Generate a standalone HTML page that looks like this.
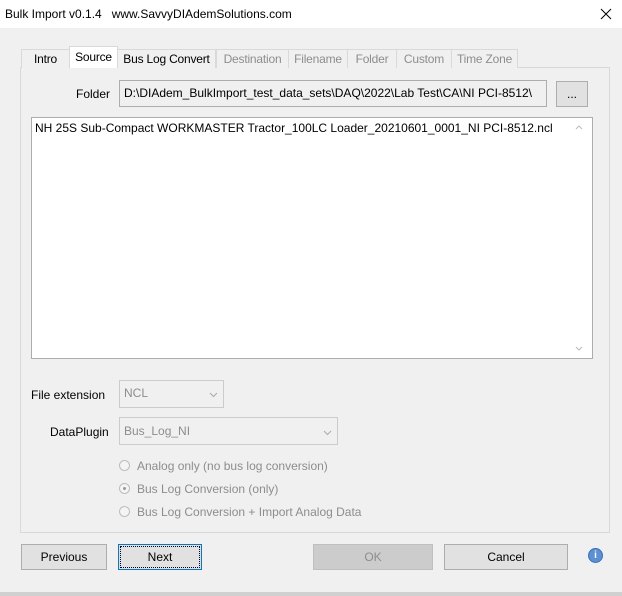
<!DOCTYPE html><html><head><style>
*{box-sizing:border-box}
body{margin:0;width:622px;height:596px;background:#f0f0f0;font-family:"Liberation Sans",sans-serif;font-size:12px;color:#000;position:relative;overflow:hidden}
.a{position:absolute}
.tab{position:absolute;top:49px;height:19px;border:1px solid #d9d9d9;border-bottom:none;background:#f0f0f0;color:#8d8d8d;text-align:center;line-height:18px;white-space:nowrap;letter-spacing:-0.2px}
.btn{position:absolute;top:544px;height:26px;border:1px solid #adadad;background:#e1e1e1;text-align:center;line-height:24px}
.dis{color:#8d8d8d}
.rad{position:absolute;left:119px;width:11px;height:11px;border:1px solid #bcbcbc;border-radius:50%;background:#f4f4f4}
</style></head><body>
<div class="a" style="left:0;top:0;width:622px;height:28px;background:#fff"></div>
<div class="a" style="left:5px;top:7px;font-size:12px">Bulk Import v0.1.4&nbsp;&nbsp; www.SavvyDIAdemSolutions.com</div>
<svg class="a" style="left:600px;top:8px" width="12" height="12"><path d="M1 1L11 11M11 1L1 11" stroke="#000" stroke-width="1"/></svg>
<div class="a" style="left:20px;top:67px;width:590px;height:466px;border:1px solid #d9d9d9"></div>
<div class="tab" style="left:21px;width:49px;color:#000">Intro</div>
<div class="tab" style="left:69px;top:46px;width:49px;height:22px;background:#fff;color:#000;line-height:20px;z-index:2">Source</div>
<div class="tab" style="left:117px;width:99px;color:#000">Bus Log Convert</div>
<div class="tab" style="left:216px;width:73px">Destination</div>
<div class="tab" style="left:288px;width:60px">Filename</div>
<div class="tab" style="left:347px;width:50px">Folder</div>
<div class="tab" style="left:396px;width:56px">Custom</div>
<div class="tab" style="left:451px;width:67px">Time Zone</div>
<div class="a" style="left:76px;top:87px">Folder</div>
<div class="a" style="left:119px;top:80px;width:428px;height:27px;border:1px solid #adadad;background:#f0f0f0;padding:5px 4px">D:\DIAdem_BulkImport_test_data_sets\DAQ\2022\Lab Test\CA\NI PCI-8512\</div>
<div class="a" style="left:556px;top:81px;width:32px;height:26px;border:1px solid #adadad;background:#e1e1e1;text-align:center;line-height:24px">...</div>
<div class="a" style="left:31px;top:117px;width:562px;height:242px;border:1px solid #adadad;background:#fff;padding:3px 3px">NH 25S Sub-Compact WORKMASTER Tractor_100LC Loader_20210601_0001_NI PCI-8512.ncl</div>
<svg class="a" style="left:575px;top:124px" width="8" height="6"><path d="M1 5L4 2L7 5" fill="none" stroke="#bbb"/></svg>
<svg class="a" style="left:575px;top:346px" width="8" height="6"><path d="M1 1L4 4L7 1" fill="none" stroke="#bbb"/></svg>
<div class="a" style="left:31px;top:388px">File extension</div>
<div class="a" style="left:119px;top:380px;width:105px;height:28px;border:1px solid #ccc;background:#f0f0f0;padding:5px 4px" ><span class="dis">NCL</span><svg class="a" style="right:5px;top:11px" width="9" height="6"><path d="M1 1L4.5 4.5L8 1" fill="none" stroke="#aaa"/></svg></div>
<div class="a" style="left:50px;top:425px">DataPlugin</div>
<div class="a" style="left:119px;top:417px;width:219px;height:28px;border:1px solid #ccc;background:#f0f0f0;padding:6px 4px"><span class="dis">Bus_Log_NI</span><svg class="a" style="right:5px;top:12px" width="9" height="6"><path d="M1 1L4.5 4.5L8 1" fill="none" stroke="#aaa"/></svg></div>
<div class="rad" style="top:460px"></div>
<div class="a dis" style="left:137px;top:459px">Analog only (no bus log conversion)</div>
<div class="rad" style="top:483px"><div class="a" style="left:3px;top:3px;width:3px;height:3px;border-radius:50%;background:#999"></div></div>
<div class="a dis" style="left:137px;top:482px">Bus Log Conversion (only)</div>
<div class="rad" style="top:506px"></div>
<div class="a dis" style="left:137px;top:505px">Bus Log Conversion + Import Analog Data</div>
<div class="btn" style="left:21px;width:86px">Previous</div>
<div class="btn" style="left:118px;width:84px;border:1px solid #0078d7;outline:1px dotted #000;outline-offset:-3px">Next</div>
<div class="btn dis" style="left:313px;width:120px;background:#ccc;border-color:#bfbfbf">OK</div>
<div class="btn" style="left:444px;width:124px">Cancel</div>
<div class="a" style="left:588px;top:548px;width:15px;height:15px;border-radius:50%;background:#5b8fd6;border:1px solid #3a6fb8;color:#fff;font-size:10px;font-weight:bold;text-align:center;line-height:13px">i</div>
<div class="a" style="left:0;top:592px;width:622px;height:4px;background:#d0d0d0"></div>
</body></html>
